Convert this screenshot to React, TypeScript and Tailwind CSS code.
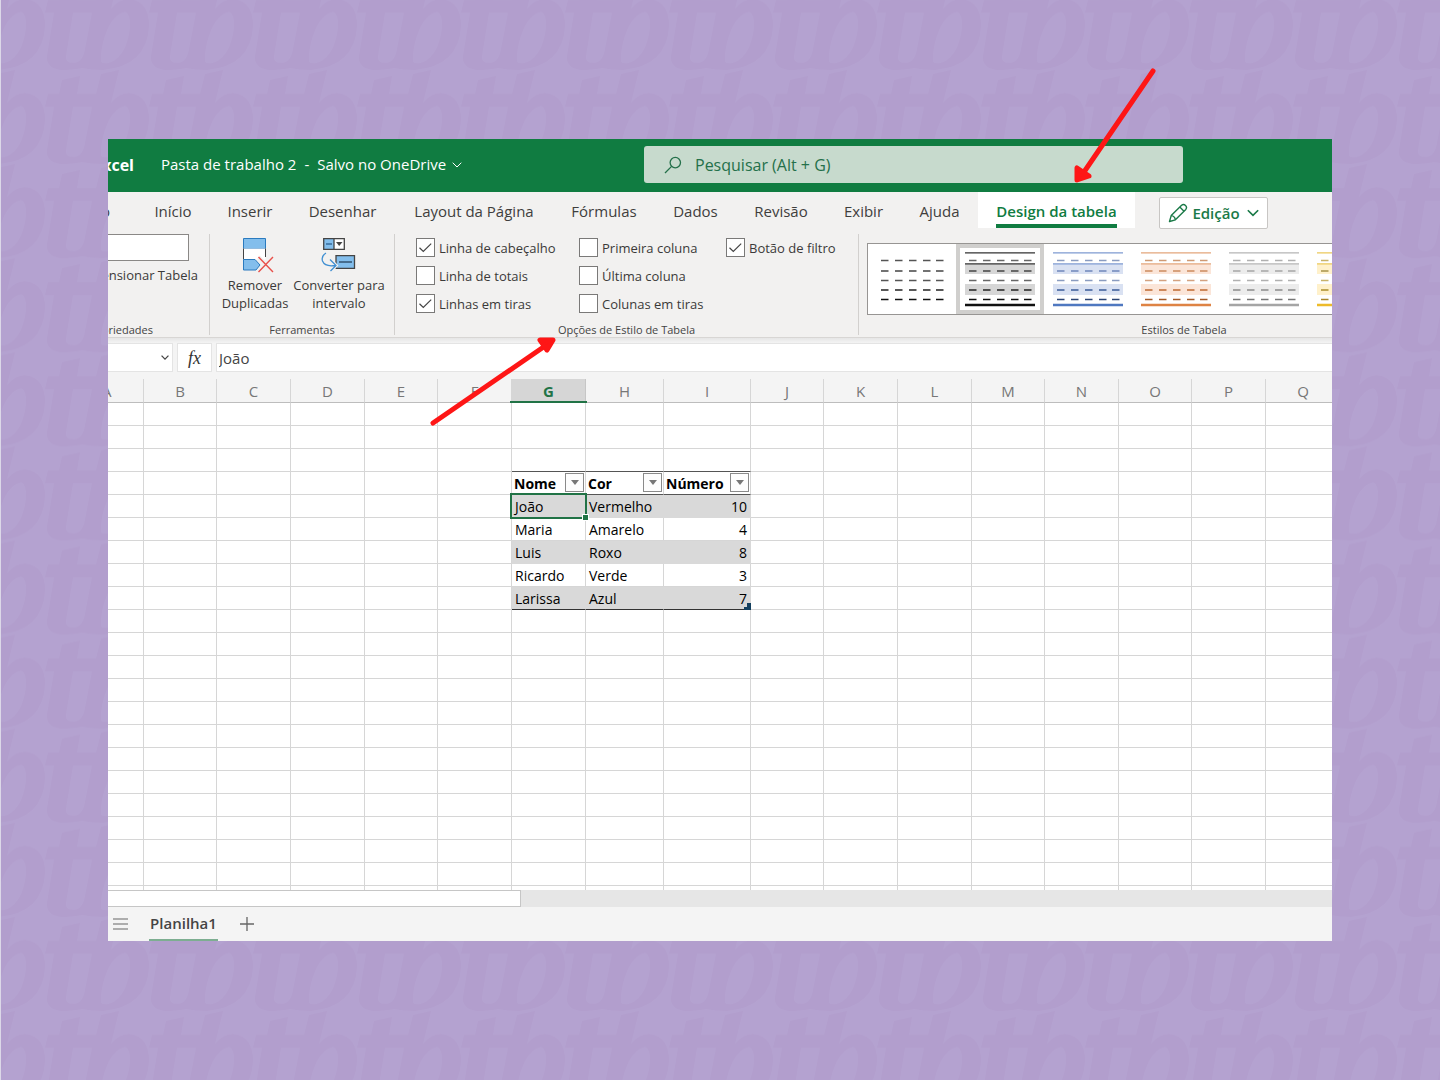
import { ReactNode } from "react";
import clsx from "clsx";

const TABS = [
  "Início",
  "Inserir",
  "Desenhar",
  "Layout da Página",
  "Fórmulas",
  "Dados",
  "Revisão",
  "Exibir",
  "Ajuda",
  "Design da tabela",
];

const COLUMNS = "ABCDEFGHIJKLMNOPQ".split("");

const COLUMN_WIDTHS = [
  "w-[36px]",
  "w-[73px]",
  "w-[74px]",
  "w-[74px]",
  "w-[73px]",
  "w-[74px]",
  "w-[74px]",
  "w-[78px]",
  "w-[87px]",
  "w-[73px]",
  "w-[74px]",
  "w-[74px]",
  "w-[73px]",
  "w-[74px]",
  "w-[73px]",
  "w-[74px]",
  "w-auto",
];

const PEOPLE = [
  ["João", "Vermelho", "10"],
  ["Maria", "Amarelo", "4"],
  ["Luis", "Roxo", "8"],
  ["Ricardo", "Verde", "3"],
  ["Larissa", "Azul", "7"],
];

const HEADERS = ["Nome", "Cor", "Número"];

// the table sits in G4:I9
const FIRST_ROW = 3;
const FIRST_COL = 6;

const STYLES = [
  { line: "none", band: "none", dash: ["#555", "#444", "#555", "#222", "#111"] },
  { line: "#333", bottom: "#111", band: "#d6d6d6", dash: ["#666", "#444", "#666", "#222", "#111"] },
  { line: "#7f9bd1", bottom: "#4f78c0", band: "#d9e1f2", dash: ["#8a9cc0", "#6f86bb", "#8a9cc0", "#3a5b98", "#2c4575"] },
  { line: "#e3a67c", bottom: "#de8344", band: "#fbe5d8", dash: ["#cf9a74", "#cc8a5e", "#d4a280", "#bf6a32", "#a35a28"] },
  { line: "#b5b5b5", bottom: "#a5a5a5", band: "#ececec", dash: ["#b0b0b0", "#a5a5a5", "#b0b0b0", "#8a8a8a", "#777"] },
  { line: "#ecc95c", bottom: "#edbb2a", band: "#fff1cb", dash: ["#c9b36a", "#a8924a", "#c9b36a", "#ab8d2c", "#a8862a"] },
  { line: "#7fa9d8", bottom: "#4a86c5", band: "#dbe9f6", dash: ["#8aa9c8", "#6f96bf", "#8aa9c8", "#3a6b98", "#2c5075"] },
];

function Wallpaper() {
  return (
    <svg className="absolute inset-0 h-full w-full" aria-hidden="true">
      <defs>
        <pattern id="logo" x="44" y="70" width="104" height="94.1" patternUnits="userSpaceOnUse">
          <path
            transform="translate(-45 -70)"
            fill="#b29ecd"
            fillRule="evenodd"
            d="M62 80L80 76L77 94H96L101 74L119 70L111 103Q119 93 129 93Q149 95 149 120Q147 160 103 164Q92 164 82 162Q70 164 62 164Q46 163 47 150L54 107H45L48 94H59Z
               M73 107H92L85 143Q83 157 73 157Q65 157 66 150Z
               M125 106Q131 108 130 122Q127 148 112 156Q104 159 101 156Q100 140 108 122Q115 108 125 106Z"
          />
        </pattern>
      </defs>
      <rect width="100%" height="100%" fill="#b4a2d0" />
      <rect width="100%" height="100%" fill="url(#logo)" />
    </svg>
  );
}

function Chevron({ className }: { className?: string }) {
  return (
    <svg viewBox="0 0 10 6" className={className} fill="none" stroke="currentColor" aria-hidden="true">
      <path d="M0.7 0.7L5 5L9.3 0.7" />
    </svg>
  );
}

function TitleBar() {
  return (
    <header className="flex h-[53px] items-center bg-[#107c41] pb-[2px] text-white">
      <div className="flex w-[536px] shrink-0 items-center text-[15px]">
        <div className="flex w-[26px] justify-end overflow-hidden text-[16px] font-bold">Excel</div>
        <button className="ml-[27px] flex items-center whitespace-pre">
          <span>Pasta de trabalho 2</span>
          <span className="px-[8px]">-</span>
          <span>Salvo no OneDrive</span>
          <Chevron className="ml-[6px] h-[6px] w-[10px]" />
        </button>
      </div>
      <label className="mr-[149px] flex h-[37px] flex-1 items-center rounded-[3px] bg-[#c7dacd] text-[#24704a]">
        <svg viewBox="0 0 18 18" className="ml-[20px] h-[18px] w-[18px]" fill="none" stroke="currentColor" strokeWidth="1.3">
          <circle cx="11.3" cy="6.6" r="5.2" />
          <path d="M7.6 10.4L1 17" />
        </svg>
        <input
          aria-label="Pesquisar"
          placeholder="Pesquisar (Alt + G)"
          className="ml-[13px] min-w-0 flex-1 bg-transparent text-[16px] outline-none placeholder:text-[#24704a]"
        />
      </label>
    </header>
  );
}

function TabBar() {
  return (
    <nav className="flex h-[36px] text-[15px] text-[#3f3e3d]">
      <div className="mr-[26px] flex w-[2px] shrink-0 justify-end overflow-hidden">
        <button className="leading-[38px]">Arquivo</button>
      </div>
      <div className="grid shrink-0 grid-cols-[74px_80px_105px_158px_102px_81px_90px_75px_77px_157px] grid-rows-[36px]">
        {TABS.map((tab) => (
          <button
            key={tab}
            className={clsx(
              "flex justify-center whitespace-nowrap leading-[38px]",
              tab === "Design da tabela" && "bg-white font-semibold text-[#107c41]"
            )}
          >
            {tab === "Design da tabela" ? (
              <span className="h-[36px] border-b-4 border-[#107c41]">{tab}</span>
            ) : (
              tab
            )}
          </button>
        ))}
      </div>
      <button className="mt-[5px] ml-[24px] flex h-[32px] w-[109px] shrink-0 items-center justify-center rounded-[2px] border border-[#c8c6c4] bg-white font-semibold text-[#1b7a48]">
        <svg viewBox="0 0 20 20" className="mr-[4px] h-[20px] w-[20px]" fill="none" stroke="currentColor" strokeWidth="1.4" strokeLinejoin="round">
          <path d="M1.5 18.5L3.2 12.6L13.6 2.2Q15.6 0.6 17.5 2.5Q19.4 4.4 17.8 6.4L7.4 16.8Z" />
          <path d="M3.2 12.6Q6.8 13 7.4 16.8M11.8 4L16 8.2" />
        </svg>
        Edição
        <Chevron className="ml-[7px] h-[8px] w-[12px] stroke-[1.4]" />
      </button>
    </nav>
  );
}

function Group({ label, className, children }: { label: string; className?: string; children: ReactNode }) {
  return (
    <section className={clsx("relative flex h-[101px] shrink-0 flex-col justify-between", className)}>
      {children}
      <div className="text-center text-[11px] leading-[10px] text-[#444]">{label}</div>
    </section>
  );
}

function Check({ label, checked }: { label: string; checked?: boolean }) {
  return (
    <label className="flex h-[28px] items-start pt-[4px] leading-[20px] whitespace-nowrap">
      <span className="relative mr-[4px] h-[19px] w-[19px]">
        <input
          type="checkbox"
          defaultChecked={checked}
          className="peer block h-[19px] w-[19px] appearance-none border border-[#7a7978] bg-white"
        />
        <svg viewBox="0 0 19 19" className="pointer-events-none absolute inset-0 hidden peer-checked:block" fill="none" stroke="#444" strokeWidth="1.2">
          <path d="M3.5 9.8L7.3 13.5L15.2 5.6" />
        </svg>
      </span>
      {label}
    </label>
  );
}

function RemoveIcon() {
  return (
    <svg viewBox="-3 0 38 36" className="h-[36px] w-[38px]" fill="none">
      <path d="M4.500 1.500H26.500V11.500H4.500Z" fill="#83beec" stroke="#2b7bbf" />
      <path d="M4.500 11.500H26.500V22.500H4.500Z" fill="#fff" />
      <path d="M4.500 11.500V22.500M26.500 11.500V20" stroke="#444" />
      <path d="M4.500 22.500H16L21 28L17 33H4.500Z" fill="#83beec" stroke="#2b7bbf" />
      <path d="M19.500 20L34 35M34 20L19.500 35" stroke="#f2f1f0" strokeWidth="4" />
      <path d="M19.500 20L34 35M34 20L19.500 35" stroke="#e8504a" strokeWidth="1.4" />
    </svg>
  );
}

function ConvertIcon() {
  return (
    <svg viewBox="0 0 36 36" className="h-[36px] w-[36px]" fill="none">
      <path d="M3 2H13V12H3Z" fill="#83beec" />
      <path d="M13 2H23V12H13Z" fill="#fff" />
      <path d="M2.7 1.7H23.3V12.3H2.7ZM13 1.7V12.3" stroke="#444" strokeWidth="1.3" />
      <path d="M5 7H11" stroke="#2b5f8f" strokeWidth="1.3" />
      <path d="M15 5H21.500L18.200 9Z" fill="#444" />
      <path d="M15 18.700H33.500V31.300H15Z" fill="#83beec" stroke="#444" strokeWidth="1.3" />
      <path d="M18 25H31" stroke="#26425c" strokeWidth="1.3" />
      <path d="M5 16Q0 19 1.500 24Q4 30 14 28.500M9 22.500L15 28.500L9.500 34" stroke="#f2f1f0" strokeWidth="3.5" />
      <path d="M5 16Q0 19 1.500 24Q4 30 14 28.500M9 22.500L15 28.500L9.500 34" stroke="#3f8fd2" strokeWidth="1.3" />
    </svg>
  );
}

function StylePreview({ style, plain }: { style: (typeof STYLES)[number]; plain?: boolean }) {
  const xs = [4, 18, 32, 46, 59];
  const ys = [8.5, 19, 28.5, 38, 47.5];
  return (
    <svg viewBox="0 0 70 55" className="h-[55px] w-[70px]" fill="none">
      {!plain && (
        <>
          <path d="M0 12H70V22H0ZM0 32H70V43H0Z" fill={style.band} />
          <path d="M0 0.800H70M0 11.800H70" stroke={style.line} strokeWidth="1.3" />
          <path d="M0 53H70" stroke={style.bottom} strokeWidth="2.6" />
        </>
      )}
      {ys.map((y, i) => (
        <path
          key={y}
          stroke={style.dash[i]}
          strokeWidth="1.3"
          d={xs.map((x) => `M${x} ${y}h7.5`).join("")}
        />
      ))}
    </svg>
  );
}

function Ribbon() {
  return (
    <div className="flex overflow-hidden border-b border-[#d8d6d4] pt-[6px] pb-[2px] text-[13px] text-[#3b3a39]">
      <section className="flex h-[101px] w-[102px] shrink-0 flex-col border-r border-[#d2d0ce]">
        <input aria-label="Nome da Tabela" className="h-[27px] w-[81px] border border-l-0 border-[#8a8886] bg-white" />
        <button className="mt-[6px] flex h-[18px] w-[90px] items-center justify-end overflow-hidden whitespace-nowrap">
          Redimensionar Tabela
        </button>
        <div className="mt-auto flex w-[45px] justify-end overflow-hidden text-[11px] leading-[11px] text-[#444]">
          Propriedades
        </div>
      </section>

      <Group label="Ferramentas" className="w-[185px] border-r border-[#d2d0ce]">
        <div className="flex pt-[3px] pl-[3px]">
          <button className="flex w-[84px] flex-col items-center leading-[18px]">
            <RemoveIcon />
            <span className="mt-[3px]">Remover Duplicadas</span>
          </button>
          <button className="-ml-[5px] flex w-[94px] flex-col items-center leading-[18px]">
            <ConvertIcon />
            <span className="mt-[3px] whitespace-nowrap">
              Converter para
              <br />
              intervalo
            </span>
          </button>
        </div>
      </Group>

      <Group label="Opções de Estilo de Tabela" className="w-[464px] border-r border-[#d2d0ce]">
        <div className="grid grid-cols-[163px_147px_1fr] pl-[21px]">
          <div>
            <Check label="Linha de cabeçalho" checked />
            <Check label="Linha de totais" />
            <Check label="Linhas em tiras" checked />
          </div>
          <div>
            <Check label="Primeira coluna" />
            <Check label="Última coluna" />
            <Check label="Colunas em tiras" />
          </div>
          <div>
            <Check label="Botão de filtro" checked />
          </div>
        </div>
      </Group>

      <div className="min-w-0 flex-1 overflow-hidden">
        <Group label="Estilos de Tabela" className="w-[650px]">
          <div className="mt-[9px] ml-[8px] flex h-[72px] border border-[#979593] bg-white">
            {STYLES.map((style, i) => (
              <button
                key={i}
                aria-label={`Estilo ${i + 1}`}
                className={clsx(
                  "flex w-[88px] shrink-0 items-center justify-center",
                  i === 1 && "border-4 border-[#d0cfcd]"
                )}
              >
                <StylePreview style={style} plain={i === 0} />
              </button>
            ))}
          </div>
        </Group>
      </div>
    </div>
  );
}

function FormulaBar() {
  return (
    <div className="flex h-[34px] gap-[4px] bg-linear-to-b from-[#e6e6e6] to-[#f4f4f4] to-[5px] pt-[5px]">
      <button aria-label="Caixa de nome" className="flex w-[65px] items-center justify-end border border-l-0 border-[#e4e4e4] bg-white pr-[3px] text-[#444]">
        <Chevron className="h-[5px] w-[8px] stroke-[1.6]" />
      </button>
      <button className="w-[35px] border border-[#e4e4e4] bg-white font-['Liberation_Serif'] text-[18px] leading-[26px] text-[#333] italic">
        fx
      </button>
      <input
        aria-label="Barra de fórmulas"
        defaultValue="João"
        className="min-w-0 flex-1 border border-r-0 border-[#e4e4e4] bg-white px-[2px] pt-px text-[15px] text-[#444] outline-none"
      />
    </div>
  );
}

function FilterButton() {
  return (
    <button aria-label="Filtrar" className="flex h-[19px] w-[19px] shrink-0 items-center justify-center border border-[#8a8a8a] bg-[#fdfdfd]">
      <svg viewBox="0 0 8 5" className="h-[5px] w-[8px]" fill="#777">
        <path d="M0 0H8L4 5Z" />
      </svg>
    </button>
  );
}

function Cell({ row, col }: { row: number; col: number }) {
  const r = row - FIRST_ROW;
  const c = col - FIRST_COL;
  const inCols = c >= 0 && c <= 2;
  const inTable = inCols && r >= 0 && r <= PEOPLE.length;

  if (!inTable) {
    return (
      <td
        className={clsx(
          "h-[23px] border-r border-b border-r-[#d6d6d6] p-0 last:border-r-0",
          inCols && r === -1 ? "border-b-[#555]" : "border-b-[#d6d6d6]"
        )}
      />
    );
  }

  if (r === 0) {
    return (
      <td className="h-[23px] border-r border-b border-r-[#d6d6d6] border-b-[#555] p-0">
        <div className="flex h-[22px] items-start justify-between pt-px pr-px pl-[2px] font-bold">
          <span className="leading-[22px]">{HEADERS[c]}</span>
          <FilterButton />
        </div>
      </td>
    );
  }

  const banded = r % 2 === 1;
  const last = r === PEOPLE.length;
  return (
    <td
      className={clsx(
        "relative h-[23px] border-r border-b p-0 leading-[22px]",
        banded ? "border-[#d9d9d9] bg-[#d9d9d9]" : "border-[#d6d6d6]",
        last && "border-b-[#333]"
      )}
    >
      <div className={clsx("h-[22px] px-[3px] pt-px", c === 2 && "text-right")}>{PEOPLE[r - 1][c]}</div>
      {r === 1 && c === 0 && (
        <div className="absolute -top-[2px] -right-[2px] -bottom-[2px] -left-[2px] z-10 border-2 border-[#217346]">
          <div className="absolute -right-[4px] -bottom-[4px] h-[7px] w-[7px] border border-white bg-[#217346]" />
        </div>
      )}
      {last && c === 2 && (
        <svg viewBox="0 0 7 7" className="absolute -right-px -bottom-px h-[7px] w-[7px]" fill="#14405f">
          <path d="M3 0H7V7H0V4H3Z" />
        </svg>
      )}
    </td>
  );
}

function Sheet() {
  return (
    <table className="w-full table-fixed border-separate border-spacing-0 bg-white text-[14px] text-black">
      <colgroup>
        {COLUMN_WIDTHS.map((width, i) => (
          <col key={i} className={width} />
        ))}
      </colgroup>
      <thead>
        <tr>
          {COLUMNS.map((name) => (
            <th
              key={name}
              className={clsx(
                "relative h-[24px] border-r border-b p-0 text-[15px] leading-[20px] last:border-r-0 last:pl-[8px]",
                name === "G"
                  ? "border-[#c6c6c6] bg-[#d6d6d6] font-bold text-[#217346]"
                  : "border-r-[#d6d6d6] border-b-[#bdbdbd] bg-[#f4f4f4] font-normal text-[#777]"
              )}
            >
              <div className={clsx("flex", name === "A" ? "justify-start overflow-hidden" : "justify-center")}>
                <span className={clsx(name === "A" && "-ml-[6px]")}>{name}</span>
              </div>
              {name === "G" && <div className="absolute -right-[2px] -bottom-px -left-[2px] z-10 h-[2px] bg-[#217346]" />}
            </th>
          ))}
        </tr>
      </thead>
      <tbody>
        {Array.from({ length: 21 }, (_, row) => (
          <tr key={row}>
            {COLUMNS.map((name, col) => (
              <Cell key={name} row={row} col={col} />
            ))}
          </tr>
        ))}
        <tr>
          {COLUMNS.map((name) => (
            <td key={name} className="h-[4px] border-r border-[#d6d6d6] p-0 last:border-r-0" />
          ))}
        </tr>
      </tbody>
    </table>
  );
}

function SheetTabs() {
  return (
    <footer className="flex h-[34px] bg-[#f4f4f4] text-[#444]">
      <button aria-label="Todas as planilhas" className="ml-[5px] flex w-[15px] items-center">
        <svg viewBox="0 0 15 12" className="h-[12px] w-[15px]" stroke="#666" strokeWidth="1.2">
          <path d="M0 1H15M0 6H15M0 11H15" />
        </svg>
      </button>
      <button className="ml-[21px] w-[69px] border-b-2 border-[#7dae91] text-[15px] font-semibold">Planilha1</button>
      <button aria-label="Nova planilha" className="ml-[22px] flex items-center">
        <svg viewBox="0 0 14 14" className="h-[14px] w-[14px]" stroke="#666" strokeWidth="1.3">
          <path d="M0 7H14M7 0V14" />
        </svg>
      </button>
    </footer>
  );
}

function Arrows() {
  return (
    <>
      <svg viewBox="0 0 90 124" className="pointer-events-none absolute top-[64px] left-[1068px] h-[124px] w-[90px]" fill="#fe1616" stroke="#fe1616" strokeLinecap="round" strokeLinejoin="round">
        <path d="M84 7L15 108" strokeWidth="5" />
        <path d="M8 104L8 116L20 112Z" strokeWidth="5" />
      </svg>
      <svg viewBox="0 0 134 98" className="pointer-events-none absolute top-[332px] left-[425px] h-[98px] w-[134px]" fill="#fe1616" stroke="#fe1616" strokeLinecap="round" strokeLinejoin="round">
        <path d="M7 91L119 14" strokeWidth="5" />
        <path d="M114 8L127 8L121 18Z" strokeWidth="5" />
      </svg>
    </>
  );
}

export default function App() {
  return (
    <div className="relative min-h-screen overflow-hidden border-l border-[#dcd8e8] bg-[#b4a2d0] font-['Open_Sans',sans-serif]">
      <Wallpaper />
      <main className="relative mt-[139px] mr-[108px] mb-[139px] ml-[107px] overflow-hidden bg-[#f4f4f4]">
        <TitleBar />
        <div className="bg-[#f2f1f0]">
          <TabBar />
          <Ribbon />
        </div>
        <FormulaBar />
        <div className="pt-[7px]">
          <Sheet />
        </div>
        <div className="h-[17px] bg-[#e6e6e6]">
          <div className="h-[17px] w-[413px] border border-l-0 border-[#c6c6c6] bg-white" />
        </div>
        <SheetTabs />
      </main>
      <Arrows />
    </div>
  );
}
